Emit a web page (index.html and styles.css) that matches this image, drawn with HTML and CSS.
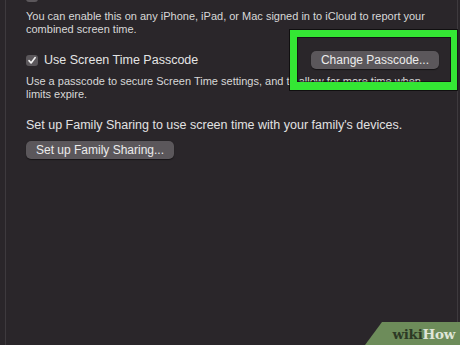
FILE: index.html
```html
<!DOCTYPE html>
<html>
<head>
<meta charset="utf-8">
<link rel="stylesheet" href="styles.css">
</head>
<body>
<div class="frame">
  <div class="content">
    <div class="row top-row">
      <span class="box"></span>
      <span class="label">Share across devices</span>
    </div>
    <p class="desc first-desc">You can enable this on any iPhone, iPad, or Mac signed in to iCloud to report your<br>combined screen time.</p>
    <div class="row pass-row">
      <div class="check-group">
        <span class="box checked"><svg viewBox="0 0 12 11" width="12" height="11"><path d="M3 5.6 L5.1 8 L9.2 2.6" fill="none" stroke="#f2f2f2" stroke-width="1.6" stroke-linecap="round" stroke-linejoin="round"/></svg></span>
        <span class="label">Use Screen Time Passcode</span>
      </div>
      <span class="btn change-btn">Change Passcode...</span>
    </div>
    <p class="desc second-desc">Use a passcode to secure Screen Time settings, and to allow for more time when<br>limits expire.</p>
    <p class="family">Set up Family Sharing to use screen time with your family's devices.</p>
    <span class="btn family-btn">Set up Family Sharing...</span>
  </div>
  <div class="highlight"></div>
</div>
<div class="wikihow"><span class="wiki">wiki</span><span class="how">How</span></div>
</body>
</html>
```
FILE: styles.css
```css
html, body {
  margin: 0;
  padding: 0;
  width: 460px;
  height: 345px;
  overflow: hidden;
  background: #2a262a;
  font-family: "Liberation Sans", Arial, sans-serif;
  color: #e2e2e2;
}
body {
  position: relative;
}
.frame {
  position: relative;
  display: flow-root;
  margin-left: 5px;
  width: 451px;
  height: 345px;
  border-left: 1px solid #3e3a3e;
  border-right: 1px solid #3e3a3e;
}
.content {
  padding-left: 20px;
  margin-top: -11px;
  display: flex;
  flex-direction: column;
  align-items: flex-start;
}
.row {
  display: flex;
  align-items: center;
}
.top-row {
  height: 14px;
}
.box {
  width: 12px;
  height: 11px;
  border-radius: 3px;
  background: #5b575b;
  display: inline-flex;
  align-items: center;
  justify-content: center;
  margin-right: 6px;
  flex: none;
}
.label {
  font-size: 12.5px;
  color: #e4e4e4;
}
.desc {
  margin: 0;
  font-size: 11px;
  line-height: 13.3px;
  color: #d8d8d8;
}
.first-desc {
  margin-top: 7px;
}
.pass-row {
  width: 415px;
  justify-content: space-between;
  margin-top: 14px;
  height: 18px;
}
.check-group {
  display: flex;
  align-items: center;
  margin-top: 1px;
}
.btn {
  display: inline-flex;
  align-items: center;
  justify-content: center;
  height: 18px;
  border-radius: 5px;
  background: #5b575b;
  color: #ececec;
  font-size: 12px;
  box-shadow: 0 0.5px 1px rgba(0,0,0,0.5);
}
.change-btn {
  width: 128px;
  margin-right: 2px;
}
.second-desc {
  margin-top: 6px;
}
.family {
  margin: 17px 0 0 0;
  font-size: 12.5px;
  color: #e2e2e2;
}
.family-btn {
  width: 148px;
  margin-top: 9px;
}
.highlight {
  position: absolute;
  left: 284px;
  top: 30px;
  width: 154px;
  height: 45px;
  border: 7px solid #34e634;
  border-bottom-width: 8px;
  border-right-width: 6px;
  box-shadow: 0 0 0 1px rgba(0,0,0,0.6), inset 0 0 0 1px rgba(0,0,0,0.5);
}
.wikihow {
  position: absolute;
  right: 0;
  bottom: 0;
  width: 95px;
  height: 23px;
  background: #6d8c5a;
  clip-path: polygon(17px 0, 100% 0, 100% 100%, 0 100%);
  display: flex;
  align-items: center;
  justify-content: flex-end;
  padding-right: 5px;
  box-sizing: border-box;
  font-family: "DejaVu Serif", "Liberation Serif", serif;
  font-weight: bold;
  font-size: 13.5px;
  letter-spacing: -0.3px;
}
.wiki {
  color: #2c3a25;
}
.how {
  color: #dfe6d8;
}
```
